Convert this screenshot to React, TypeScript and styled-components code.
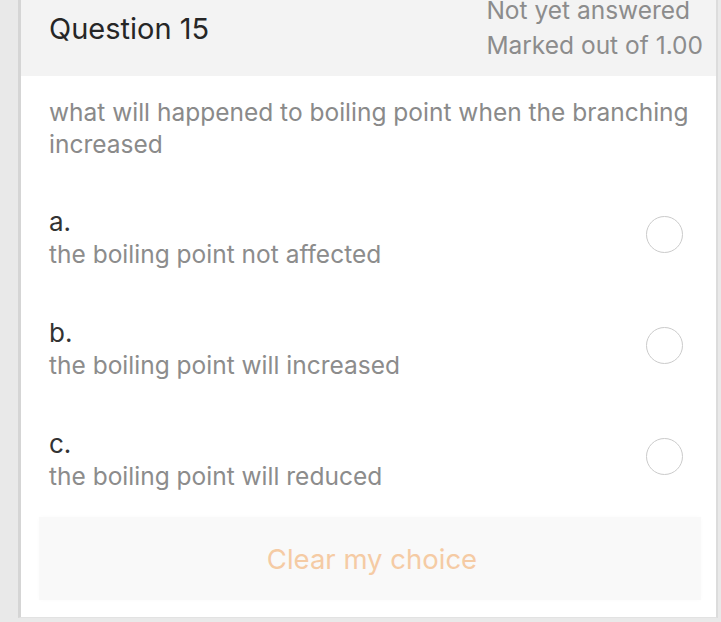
import React from "react";
import styled, { createGlobalStyle } from "styled-components";

const Global = createGlobalStyle`
  html, body { margin: 0; padding: 0; background: #e9e9e9; }
  body { font-family: Inter, "Open Sans", Arial, sans-serif; overflow: hidden; }
  * { box-sizing: border-box; }
`;

const Page = styled.div`
  display: flex;
  height: 622px;
  padding-left: 18px;
  padding-right: 3px;
  padding-bottom: 4px;
  background: #e9e9e9;
`;

const Card = styled.div`
  flex: 1;
  display: flex;
  flex-direction: column;
  background: #ffffff;
  border-left: 3px solid #d5d5d5;
  border-right: 2px solid #dcdcdc;
  border-bottom: 1px solid #e2e2e2;
  overflow: hidden;
`;

const Header = styled.div`
  height: 76px;
  flex: none;
  background: #f3f3f3;
  display: flex;
  justify-content: space-between;
  align-items: flex-start;
  padding: 0 13px 0 28px;
`;

const Title = styled.div`
  margin-top: 11px;
  font-size: 29px;
  line-height: 36px;
  color: #262626;
`;

const State = styled.div`
  margin-top: -7px;
  display: flex;
  flex-direction: column;
  font-size: 24.5px;
  line-height: 35px;
  color: #8c8c8c;
`;

const Body = styled.div`
  flex: 1;
  display: flex;
  flex-direction: column;
  padding: 20px 15px 18px 28px;
`;

const QuestionText = styled.div`
  font-size: 24.5px;
  line-height: 32px;
  color: #8a8a8a;
`;

const Options = styled.div`
  display: flex;
  flex-direction: column;
  gap: 47px;
  margin-top: 46px;
`;

const Option = styled.div`
  display: flex;
  align-items: center;
  justify-content: space-between;
  height: 64px;
  padding-right: 18px;
`;

const OptionText = styled.div`
  display: flex;
  flex-direction: column;
`;

const Letter = styled.div`
  font-size: 26px;
  line-height: 32px;
  color: #333333;
`;

const Answer = styled.div`
  font-size: 24.5px;
  line-height: 32px;
  color: #8c8c8c;
`;

const Radio = styled.div`
  width: 37px;
  height: 37px;
  border-radius: 50%;
  border: 1.5px solid #cbcbcb;
  margin-top: -8px;
  flex: none;
`;

const ClearButton = styled.div`
  margin-top: 25px;
  margin-left: -10px;
  margin-right: 0;
  height: 83px;
  display: flex;
  align-items: center;
  justify-content: center;
  background: #f9f9f9;
  box-shadow: 0 0 4px rgba(0, 0, 0, 0.02);
  font-size: 27.5px;
  color: #f5cba4;
  padding-left: 4px;
`;

const options = [
  { letter: "a.", text: "the boiling point not affected" },
  { letter: "b.", text: "the boiling point will increased" },
  { letter: "c.", text: "the boiling point will reduced" },
];

export default function App() {
  return (
    <>
      <Global />
      <Page>
        <Card>
          <Header>
            <Title>Question 15</Title>
            <State>
              <span>Not yet answered</span>
              <span>Marked out of 1.00</span>
            </State>
          </Header>
          <Body>
            <QuestionText>
              what will happened to boiling point when the branching increased
            </QuestionText>
            <Options>
              {options.map((o) => (
                <Option key={o.letter}>
                  <OptionText>
                    <Letter>{o.letter}</Letter>
                    <Answer>{o.text}</Answer>
                  </OptionText>
                  <Radio />
                </Option>
              ))}
            </Options>
            <ClearButton>Clear my choice</ClearButton>
          </Body>
        </Card>
      </Page>
    </>
  );
}
